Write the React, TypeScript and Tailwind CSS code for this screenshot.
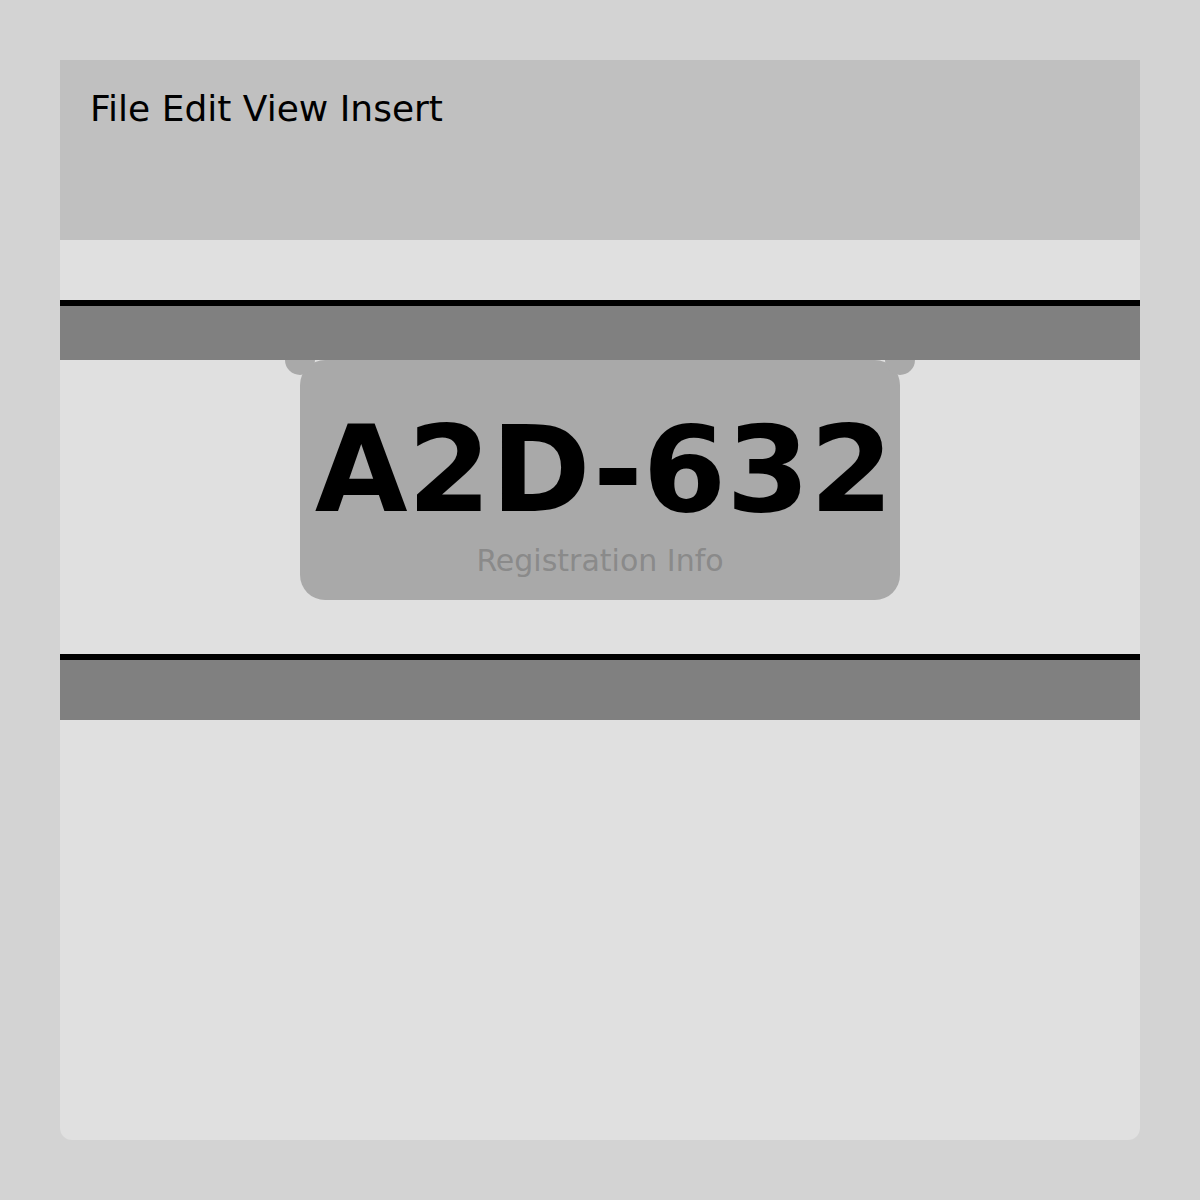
const Band = ({ h }: { h: string }) => (
  <div className={`relative z-10 border-t-[6px] border-black bg-[#808080] ${h}`} />
);

const Plate = () => (
  <div className="relative mx-auto h-[240px] w-[600px] rounded-[25px] bg-[#a9a9a9] text-center">
    {/* mounting holes */}
    <div className="absolute -left-[15px] -top-[15px] h-[30px] w-[30px] rounded-full bg-[#a9a9a9]" />
    <div className="absolute -right-[15px] -top-[15px] h-[30px] w-[30px] rounded-full bg-[#a9a9a9]" />
    <div className="pl-[8px] pt-[50px] text-[120px] font-bold leading-[120px] text-black">A2D-632</div>
    <div className="mt-[16px] text-[30px] leading-[30px] text-[#8a8a8a]">Registration Info</div>
  </div>
);

export default function App() {
  return (
    <div
      className="min-h-[1200px] bg-[#d3d3d3] p-[60px]"
      style={{ fontFamily: '"DejaVu Sans", sans-serif' }}
    >
      <div className="flex h-[1080px] flex-col rounded-b-xl bg-[#e0e0e0]">
        <div className="h-[180px] bg-[#c0c0c0] px-[30px] pt-[31px]">
          <div className="text-[36px] leading-[36px] text-black">File Edit View Insert</div>
        </div>
        <div className="h-[60px]" />
        <Band h="h-[60px]" />
        <Plate />
        <div className="h-[54px]" />
        <Band h="h-[66px]" />
      </div>
    </div>
  );
}
